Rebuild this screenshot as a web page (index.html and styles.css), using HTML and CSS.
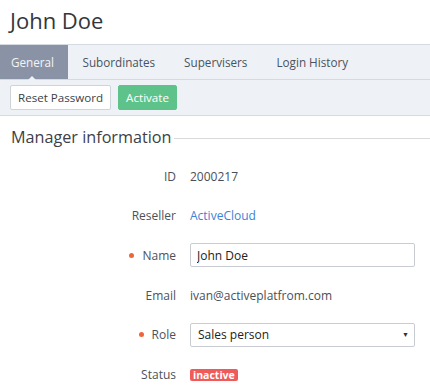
FILE: index.html
```html
<!DOCTYPE html>
<html lang="en">
<head>
    <meta charset="UTF-8">
    <title>John Doe</title>
    <link rel="stylesheet" href="styles.css">
</head>
<body>
    <!-- Page Header -->
    <h1 class="page-title">John Doe</h1>

    <!-- Tabs -->
    <nav class="tabs">
        <a class="tab active" href="#">General</a>
        <a class="tab" href="#">Subordinates</a>
        <a class="tab" href="#">Supervisers</a>
        <a class="tab" href="#">Login History</a>
    </nav>

    <!-- Toolbar -->
    <div class="toolbar">
        <button class="btn btn-default">Reset Password</button>
        <button class="btn btn-success">Activate</button>
    </div>

    <!-- Manager Information -->
    <section class="section">
        <h2 class="section-title"><span>Manager information</span></h2>

        <div class="form">
            <div class="form-row">
                <div class="label">ID</div>
                <div class="value">2000217</div>
            </div>
            <div class="form-row">
                <div class="label">Reseller</div>
                <div class="value"><a class="link" href="#">ActiveCloud</a></div>
            </div>
            <div class="form-row">
                <div class="label required">Name</div>
                <div class="value"><input class="input" type="text" value="John Doe"></div>
            </div>
            <div class="form-row">
                <div class="label">Email</div>
                <div class="value">ivan@activeplatfrom.com</div>
            </div>
            <div class="form-row">
                <div class="label required">Role</div>
                <div class="value">
                    <div class="select">
                        <span>Sales person</span>
                        <span class="caret">&#9660;</span>
                    </div>
                </div>
            </div>
            <div class="form-row">
                <div class="label">Status</div>
                <div class="value"><span class="badge">inactive</span></div>
            </div>
        </div>
    </section>
</body>
</html>
```

FILE: styles.css
```css
/* Basic Reset */
* {
    margin: 0;
    padding: 0;
    box-sizing: border-box;
}
body {
    font-family: 'Open Sans', sans-serif;
    font-size: 12px;
    color: #4a4f57;
    background: #fff;
    overflow: hidden;
}

/* Header */
.page-title {
    font-size: 22px;
    font-weight: 400;
    color: #33363b;
    height: 44px;
    line-height: 40px;
    padding-left: 10px;
}

/* Tabs */
.tabs {
    display: flex;
    height: 36px;
    background: #eef2f6;
    border-top: 1px solid #d5dae0;
    border-bottom: 1px solid #d5dae0;
}
.tab {
    display: flex;
    align-items: center;
    padding: 0 14.5px;
    color: #4a5260;
    text-decoration: none;
    font-size: 11.7px;
}
.tab.active {
    position: relative;
    background: #8a93a5;
    color: #f2f4f7;
    width: 68px;
    padding-left: 11px;
}
.tab.active::after {
    content: "";
    position: absolute;
    left: 28px;
    bottom: -1px;
    border: 4px solid transparent;
    border-bottom-color: #eef2f6;
}

/* Toolbar */
.toolbar {
    display: flex;
    gap: 7px;
    height: 36px;
    padding: 5px 10px 0;
    background: #eef2f6;
    border-bottom: 1px solid #d5dae0;
}
.btn {
    height: 25px;
    padding: 0 7px;
    font-family: inherit;
    font-size: 11.6px;
    border-radius: 2px;
    cursor: pointer;
}
.btn-default {
    background: #fff;
    color: #3b3f46;
    border: 1px solid #cfd4da;
}
.btn-success {
    background: #5ec38b;
    color: #fff;
    border: 1px solid #5ec38b;
}

/* Section */
.section {
    padding-top: 9px;
}
.section-title {
    display: flex;
    align-items: center;
    font-size: 16.2px;
    font-weight: 400;
    color: #3d4047;
    padding-left: 11px;
    height: 24px;
}
.section-title::after {
    content: "";
    flex: 1;
    height: 1px;
    margin: 3px 0 0 2px;
    background: #d9d9d9;
}

/* Form */
.form {
    display: flex;
    flex-direction: column;
    gap: 15.7px;
    padding-top: 15px;
}
.form-row {
    display: grid;
    grid-template-columns: 176px 1fr;
    column-gap: 14px;
    align-items: center;
    min-height: 24px;
}
.label {
    text-align: right;
    color: #4d525a;
}
.label.required::before {
    content: "";
    display: inline-block;
    width: 5px;
    height: 5px;
    margin: 0 8px 2px 0;
    border-radius: 50%;
    background: #f0643a;
}
.value {
    color: #4a4f57;
    padding-right: 15px;
}
.link {
    color: #3d82d6;
    text-decoration: none;
}
.input, .select {
    width: 225px;
    height: 24px;
    border: 1px solid #c8ccd2;
    border-radius: 2px;
    font-family: inherit;
    font-size: 12px;
    color: #222;
    padding: 0 6px;
}
.select {
    display: flex;
    align-items: center;
    justify-content: space-between;
    padding: 0 5px 0 7px;
}
.caret {
    font-size: 7px;
    color: #333;
}
.badge {
    display: inline-block;
    background: #ef5a5a;
    color: #fff;
    font-weight: 700;
    font-size: 10.5px;
    line-height: 12px;
    padding: 0 3px;
    border-radius: 2px;
}
```
